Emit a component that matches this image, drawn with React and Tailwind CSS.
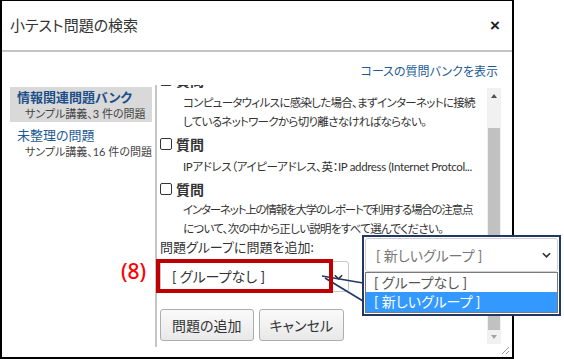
import React from 'react';

const font = "font-['Lato','Noto_Sans_CJK_JP',sans-serif] [font-feature-settings:'palt']";

const Chevron = ({ className }) => (
  <svg viewBox="0 0 10 6" className={className} fill="none" stroke="currentColor" strokeWidth="1.8">
    <path d="M1 1 L5 5 L9 1" />
  </svg>
);

const Checkbox = () => (
  <span className="inline-block w-[12px] h-[12px] border-[1.5px] border-[#333] rounded-[2px] bg-white" />
);

// lines: [text, trackingClass]
const QuestionItem = ({ lines, pt }) => (
  <div className="mb-[2px]">
    <div className="h-[22px] flex items-center gap-[4px]">
      <Checkbox />
      <span className="text-[14px] font-bold text-[#333]">質問</span>
    </div>
    <div className={`pl-[23px] text-[11.5px] leading-[19px] text-[#333] whitespace-nowrap ${pt}`}>
      {lines.map(([text, tr], i) => (
        <div key={i} className={tr}>{text}</div>
      ))}
    </div>
  </div>
);

const Scrollbar = () => (
  <div className="w-[14px] mt-[3px] mb-[3px] bg-[#f1f1f1] flex flex-col">
    <div className="h-[16px] flex items-center justify-center">
      <span className="w-0 h-0 border-l-[3.5px] border-r-[3.5px] border-b-[4px] border-l-transparent border-r-transparent border-b-[#505050]" />
    </div>
    <div className="h-[24px]" />
    <div className="h-[202px] mx-[1px] bg-[#c1c1c1]" />
    <div className="flex-1 flex items-center justify-center">
      <span className="w-0 h-0 border-l-[3.5px] border-r-[3.5px] border-t-[4px] border-l-transparent border-r-transparent border-t-[#a3a3a3]" />
    </div>
  </div>
);

export default function App() {
  return (
    <div className={`relative w-[564px] h-[359px] bg-white overflow-hidden ${font}`}>
      <div className="relative w-[514px] h-[359px] border-black border-t border-l-2 border-r-2 border-b-2 bg-white">
        {/* header */}
        <div className="h-[51px] border-b-2 border-[#c4c4c4] flex items-center justify-between pl-[8px] pr-[12px]">
          <span className="text-[15px] text-[#333] pb-[1px]">小テスト問題の検索</span>
          <span className="text-[17px] font-bold text-[#222] font-['Liberation_Sans',sans-serif] leading-none">×</span>
        </div>

        <div className="pt-[12px] pb-[5px] pr-[14px] text-right text-[12px] leading-[16px] text-[#1e5b96]">
          コースの質問バンクを表示
        </div>

        <div className="flex h-[262px]">
          {/* sidebar */}
          <div className="w-[142px] ml-[8px] mr-[3px] pt-[2px]">
            <div className="bg-[#d9d9d9] h-[35px] pl-[7px]">
              <div className="text-[13px] font-bold leading-[20px] text-[#1c4f8a]">情報関連問題バンク</div>
              <div className="text-[11px] leading-[14px] text-[#444] pl-[8px]">サンプル講義、3 件の問題</div>
            </div>
            <div className="pl-[7px] pt-[4px]">
              <div className="text-[13px] leading-[18px] text-[#1e5b96]">未整理の問題</div>
              <div className="text-[11px] leading-[14px] text-[#444] pl-[8px] mt-[1px]">サンプル講義、16 件の問題</div>
            </div>
          </div>

          {/* question panel */}
          <div className="w-[346px] border-l-2 border-[#c4c4c4] flex">
            <div className="flex-1 overflow-hidden pl-[3px]">
              <div className="mt-[-16px]">
                <QuestionItem
                  pt="pt-[2px]"
                  lines={[
                    ['コンピュータウィルスに感染した場合、まずインターネットに接続', 'tracking-[-0.7px]'],
                    ['しているネットワークから切り離さなければならない。', 'tracking-[-0.7px]'],
                  ]}
                />
                <QuestionItem
                  pt="pt-[2px]"
                  lines={[['IPアドレス（アイピーアドレス、英：IP address (Internet Protcol...', 'tracking-[-0.35px]']]}
                />
                <QuestionItem
                  pt="pt-0"
                  lines={[
                    ['インターネット上の情報を大学のレポートで利用する場合の注意点', 'tracking-[-1.2px]'],
                    ['について、次の中から正しい説明をすべて選んでください。', 'tracking-[-0.7px]'],
                  ]}
                />
                <div className="text-[13px] leading-[18px] text-[#333] -mt-[2px]">問題グループに問題を追加:</div>
                <div className="mt-[5px] w-[189px] h-[31px] border border-[#c8c8c8] rounded-[3px] flex items-center justify-between pl-[11px] pr-[5px] text-[14px] text-[#333]">
                  <span>[ グループなし ]</span>
                  <Chevron className="w-[9px] h-[6px] text-[#333]" />
                </div>
                <div className="mt-[17px] flex gap-[5px]">
                  <button className="h-[32px] px-[11px] text-[14px] text-[#333] border border-[#adadad] rounded-[3px] bg-gradient-to-b from-[#fafafa] to-[#e8e8e8]">
                    問題の追加
                  </button>
                  <button className="h-[32px] px-[10px] text-[14px] text-[#333] border border-[#adadad] rounded-[3px] bg-gradient-to-b from-[#fafafa] to-[#e8e8e8]">
                    キャンセル
                  </button>
                </div>
              </div>
            </div>
            <Scrollbar />
          </div>
        </div>

        {/* resize grip */}
        <svg className="absolute right-[2px] bottom-[2px] w-[10px] h-[10px]" viewBox="0 0 10 10" stroke="#999" strokeWidth="1">
          <path d="M9 2 L2 9 M9 6 L6 9" />
        </svg>
      </div>

      {/* callout annotations */}
      <svg className="absolute left-0 top-0 w-[564px] h-[359px] pointer-events-none" viewBox="0 0 564 359" stroke="#1f3864" strokeWidth="1.6" fill="none">
        <path d="M322 276 L363 283" />
        <path d="M325 278 L363 301" />
      </svg>

      <div className="absolute left-[156px] top-[259px] w-[177px] h-[34px] border-[4px] border-[#c00000]" />
      <div className="absolute left-[121px] top-[258px] text-[21px] font-medium text-[#ff0000] leading-[26px] font-['Noto_Sans',sans-serif]">
        (8)
      </div>

      <div className="absolute left-[362px] top-[235px] w-[199px] h-[81px] border-2 border-[#1f3864] bg-white p-[1px] flex flex-col">
        <div className="h-[34px] border border-[#cfcfcf] rounded-[3px] flex items-center justify-between pl-[10px] pr-[6px] text-[14px] text-[#777]">
          <span>[ 新しいグループ ]</span>
          <Chevron className="w-[9px] h-[6px] text-[#333]" />
        </div>
        <div className="flex-1 border border-[#7a7a7a] flex flex-col">
          <div className="h-[19px] pl-[8px] text-[14px] leading-[19px] text-[#555]">[ グループなし ]</div>
          <div className="flex-1 pl-[8px] text-[14px] leading-[19px] text-white bg-[#3399ff]">[ 新しいグループ ]</div>
        </div>
      </div>
    </div>
  );
}
